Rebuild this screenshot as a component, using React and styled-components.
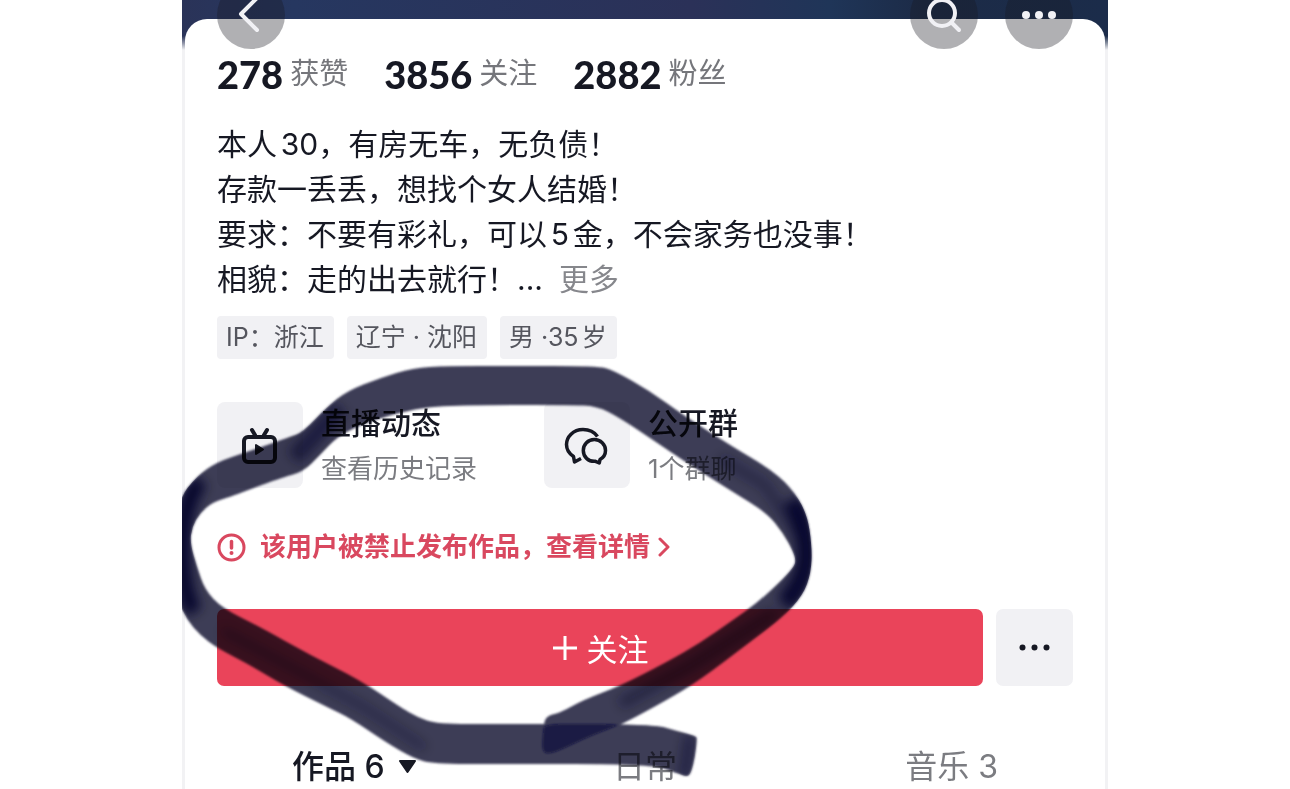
import React from "react";
import styled, { createGlobalStyle } from "styled-components";

const GlobalStyle = createGlobalStyle`
  *, *::before, *::after { box-sizing: border-box; }
  body {
    margin: 0;
    background: #fff;
    color: #161823;
    font-family: Inter, "Noto Sans CJK SC", sans-serif;
    text-autospace: normal;
  }
  button { font: inherit; color: inherit; border: 0; padding: 0; cursor: pointer; }
  a { color: inherit; text-decoration: none; }
  p, h2, ul { margin: 0; padding: 0; }
`;

const Phone = styled.main`
  position: relative;
  display: flex;
  flex-direction: column;
  max-width: 926px;
  min-height: 100vh;
  margin: 0 auto;
  padding: 19px 3px 0;
  overflow: hidden;
  background:
    linear-gradient(to bottom, transparent 36px, #f2f2f4 50px),
    linear-gradient(to right, #2a3358 0, #263760 12%, #2b3158 55%, #1f3558 70%, #1c2b47 80%, #1b2c4a 100%);
`;

const TopBar = styled.nav`
  position: absolute;
  z-index: 1;
  top: -19px;
  left: 35px;
  right: 35px;
  display: flex;
  gap: 27px;
`;

const RoundButton = styled.button`
  width: 68px;
  height: 68px;
  border-radius: 50%;
  background: rgba(22, 22, 32, 0.34);
  margin-right: ${(p) => (p.$push ? "auto" : "0")};
  svg { display: block; }
`;

const Panel = styled.section`
  flex: 1;
  border-radius: 22px 22px 0 0;
  padding-top: 31px;
  background: #fff;
`;

const Content = styled.div`
  padding: 0 32px;
`;

const Stats = styled.ul`
  display: flex;
  gap: 36px;
  list-style: none;
`;

const Stat = styled.li`
  display: flex;
  align-items: center;
  gap: 7px;
  font-size: 29px;
  line-height: 48px;
  color: #75767b;
  strong {
    font-family: Lato, sans-serif;
    font-size: 38px;
    font-weight: 900;
    color: #161823;
  }
`;

const Bio = styled.div`
  margin-top: 24px;
  font-size: 30px;
  line-height: 45px;
`;

const LastLine = styled.div`
  display: flex;
  gap: 16px;
`;

const More = styled.a`
  color: #86878c;
`;

const Tags = styled.ul`
  display: flex;
  gap: 13px;
  margin-top: 14px;
  list-style: none;
`;

const Tag = styled.li`
  padding: 0 10px 0 9px;
  border-radius: 4px;
  background: #f1f1f4;
  color: #55565e;
  font-size: 25px;
  line-height: 43px;
`;

const Cards = styled.div`
  display: flex;
  gap: 67px;
  margin-top: 43px;
`;

const Card = styled.a`
  display: flex;
  gap: 18px;
`;

const CardIcon = styled.span`
  width: 86px;
  height: 86px;
  border-radius: 8px;
  background: #f1f1f4;
  svg { display: block; }
`;

const CardTitle = styled.h2`
  font-size: 30px;
  line-height: 43px;
  font-weight: 500;
`;

const CardNote = styled.p`
  margin-top: 5px;
  font-size: 26px;
  line-height: 38px;
  color: #7b7c81;
  text-autospace: no-autospace;
`;

const Notice = styled.a`
  display: flex;
  align-items: center;
  margin-top: 41px;
  color: #d9485f;
  font-size: 26px;
  line-height: 36px;
  font-weight: 700;
  span { margin-left: 14px; margin-right: 7px; }
`;

const Actions = styled.div`
  display: flex;
  gap: 13px;
  margin-top: 44px;
`;

const FollowButton = styled.button`
  display: flex;
  flex: 1;
  align-items: center;
  justify-content: center;
  gap: 9px;
  height: 77px;
  border-radius: 7px;
  background: #ea445a;
  color: #fff;
  font-size: 31px;
`;

const MoreButton = styled.button`
  width: 77px;
  height: 77px;
  border-radius: 7px;
  background: #f1f1f4;
  svg { display: block; }
`;

const Tabs = styled.nav`
  display: grid;
  grid-template-columns: repeat(3, 1fr);
  margin-top: 59px;
`;

const Tab = styled.button`
  display: flex;
  align-items: center;
  justify-content: center;
  background: none;
  font-size: 32px;
  line-height: 44px;
  font-weight: ${(p) => (p.$active ? 500 : 400)};
  color: ${(p) => (p.$active ? "#161823" : "#7b7c81")};
  svg { margin-left: 13px; margin-right: -32px; }
`;

const Ink = styled.svg`
  position: absolute;
  z-index: 2;
  top: 0;
  left: 0;
  width: 926px;
  height: 789px;
  pointer-events: none;
  mix-blend-mode: multiply;
`;

const OUTLINE = [
  [545, 716], [560, 713], [583, 700], [620, 686], [667, 662], [700, 643], [733, 620], [757, 603],
  [780, 582], [793, 568], [796, 561], [793, 551], [783, 533], [767, 513], [733, 492], [687, 463],
  [650, 438], [620, 418], [597, 406], [570, 405], [500, 405], [433, 406], [397, 413], [360, 425],
  [337, 437], [320, 455], [303, 472], [280, 478], [230, 497], [213, 502], [200, 513], [192, 527],
  [190, 543], [197, 567], [205, 590], [222, 608], [260, 627], [310, 655], [360, 680], [400, 707],
  [417, 717], [437, 724], [500, 724], [653, 724], [677, 731], [696, 736], [697, 739], [695, 757],
  [691, 773], [687, 777], [677, 773], [650, 764], [500, 764], [433, 764], [413, 758], [387, 743],
  [350, 718], [327, 707], [283, 685], [250, 665], [217, 648], [200, 635], [187, 620], [178, 600],
  [176, 550], [178, 500], [197, 476], [217, 462], [247, 452], [290, 437], [303, 432], [327, 407],
  [347, 391], [380, 378], [413, 368], [447, 366], [510, 366], [597, 366], [613, 370], [650, 391],
  [683, 415], [733, 447], [767, 467], [790, 486], [807, 513], [812, 547], [811, 573], [803, 595],
  [783, 617], [750, 642], [700, 680], [667, 700], [617, 727], [590, 736], [567, 747], [550, 754],
  [542, 752], [543, 733],
];

const OVERLAP = [
  [544, 724], [580, 724], [620, 724], [614, 727], [590, 736], [567, 747], [550, 754], [542, 752], [543, 733],
];

// Closed curve that rounds every corner through the midpoints of its edges.
function smooth(points) {
  const mid = (a, b) => `${(a[0] + b[0]) / 2} ${(a[1] + b[1]) / 2}`;
  const last = points[points.length - 1];
  return (
    `M${mid(last, points[0])}` +
    points.map((p, i) => `Q${p[0]} ${p[1]} ${mid(p, points[(i + 1) % points.length])}`).join("") +
    "Z"
  );
}

function Scribble() {
  const outline = smooth(OUTLINE);
  return (
    <Ink viewBox="182 0 926 789" aria-hidden="true">
      <defs>
        <filter id="edge" x="-5%" y="-5%" width="110%" height="110%">
          <feGaussianBlur stdDeviation="1" />
        </filter>
        <filter id="streak" filterUnits="userSpaceOnUse" x="150" y="340" width="700" height="460">
          <feGaussianBlur stdDeviation="6" />
        </filter>
        <clipPath id="band">
          <path d={outline} />
        </clipPath>
      </defs>
      <path d={outline} fill="#3d3c57" filter="url(#edge)" />
      <path d={smooth(OVERLAP)} fill="#0b0b3c" fillOpacity="0.75" filter="url(#edge)" />
      <g clipPath="url(#band)">
        <g fill="none" stroke="#03032a" filter="url(#streak)">
          <path d="M200 480Q182 505 182 548T194 612" strokeWidth="17" strokeOpacity="0.9" />
          <path d="M792 500Q808 530 806 562Q802 586 784 604" strokeWidth="19" strokeOpacity="0.9" />
          <path d="M720 458L765 485L798 535" strokeWidth="10" strokeOpacity="0.35" />
          <path d="M776 612L690 666L620 704" strokeWidth="12" strokeOpacity="0.4" />
          <path d="M294 458Q320 430 340 408" strokeWidth="18" strokeOpacity="0.55" />
          <path d="M222 630L300 672L365 708L425 748" strokeWidth="8" strokeOpacity="0.35" />
          <path d="M690 735L684 778" strokeWidth="10" strokeOpacity="0.5" />
        </g>
      </g>
    </Ink>
  );
}

const BackIcon = () => (
  <svg width="68" height="68" fill="none" stroke="#f1f1f5" strokeWidth="4" strokeLinecap="round" strokeLinejoin="round">
    <path d="M40 17L24 33L40 49" />
  </svg>
);

const SearchIcon = () => (
  <svg width="68" height="68" fill="none" stroke="#f1f1f5" strokeWidth="4" strokeLinecap="round">
    <circle cx="32" cy="32" r="13" />
    <path d="M42 42L49 49" />
  </svg>
);

const DotsIcon = ({ size, r, step, color }) => (
  <svg width={size} height={size} fill={color}>
    {[-step, 0, step].map((dx) => (
      <circle key={dx} cx={size / 2 + dx} cy={size / 2} r={r} />
    ))}
  </svg>
);

const LiveIcon = () => (
  <svg width="86" height="86" fill="none" stroke="#161823" strokeWidth="4" strokeLinecap="round" strokeLinejoin="round">
    <rect x="27" y="35" width="31" height="25" rx="4" />
    <path d="M35 28L38 33M50 28L47 33" />
    <path d="M39 43V52L46 47.500Z" fill="#161823" strokeWidth="2" />
  </svg>
);

const ChatIcon = () => (
  <svg width="86" height="86" fill="none" stroke="#161823" strokeWidth="3.500" strokeLinejoin="round">
    <path d="M53.500 34.500C50 29.500 45 27.500 39 27.500C29 27.500 22.500 35 22.500 42.500C22.500 47.500 25 51.500 29.500 54.500L30.500 60L37 56.500" />
    <path d="M50.300 37.500C56.500 37.500 61.500 42.300 61.500 48.500C61.500 52.500 59.500 55.500 56 57.500L55.300 61L51.500 59.300C44.500 60 39.300 55 39.300 48.500C39.300 42.300 44 37.500 50.300 37.500Z" />
  </svg>
);

const WarningIcon = () => (
  <svg width="29" height="29" fill="none" stroke="currentColor" strokeWidth="3" strokeLinecap="round">
    <circle cx="14.500" cy="14.500" r="12.500" />
    <path d="M14.500 8.500V15" strokeWidth="3.500" />
    <circle cx="14.500" cy="20" r="2" fill="currentColor" stroke="none" />
  </svg>
);

const ChevronIcon = () => (
  <svg width="16" height="20" fill="none" stroke="currentColor" strokeWidth="3" strokeLinecap="round" strokeLinejoin="round">
    <path d="M3 2L11 10L3 18" />
  </svg>
);

const PlusIcon = () => (
  <svg width="26" height="26" fill="none" stroke="#fff" strokeWidth="3">
    <path d="M13 1V25M1 13H25" />
  </svg>
);

const CaretIcon = () => (
  <svg width="19" height="16" fill="currentColor" stroke="currentColor" strokeWidth="2" strokeLinejoin="round">
    <path d="M2 2H17L9.500 13Z" />
  </svg>
);

const STATS = [
  ["278", "获赞"],
  ["3856", "关注"],
  ["2882", "粉丝"],
];

const BIO = ["本人30，有房无车，无负债！", "存款一丢丢，想找个女人结婚！", "要求：不要有彩礼，可以5金，不会家务也没事！"];

const TAGS = ["IP：浙江", "辽宁 · 沈阳", "男 ·35岁"];

const CARDS = [
  { icon: <LiveIcon />, title: "直播动态", note: "查看历史记录" },
  { icon: <ChatIcon />, title: "公开群", note: "1个群聊" },
];

export default function App() {
  return (
    <>
      <GlobalStyle />
      <Phone>
        <TopBar>
          <RoundButton $push aria-label="返回"><BackIcon /></RoundButton>
          <RoundButton aria-label="搜索"><SearchIcon /></RoundButton>
          <RoundButton aria-label="更多选项">
            <DotsIcon size={68} r={4} step={13} color="#f1f1f5" />
          </RoundButton>
        </TopBar>
        <Panel>
          <Content>
            <Stats>
              {STATS.map(([count, label]) => (
                <Stat key={label}><strong>{count}</strong><span>{label}</span></Stat>
              ))}
            </Stats>
            <Bio>
              {BIO.map((line) => <p key={line}>{line}</p>)}
              <LastLine>
                <p>相貌：走的出去就行！...</p>
                <More href="#more">更多</More>
              </LastLine>
            </Bio>
            <Tags>
              {TAGS.map((tag) => <Tag key={tag}>{tag}</Tag>)}
            </Tags>
            <Cards>
              {CARDS.map((card) => (
                <Card key={card.title} href="#card">
                  <CardIcon>{card.icon}</CardIcon>
                  <div>
                    <CardTitle>{card.title}</CardTitle>
                    <CardNote>{card.note}</CardNote>
                  </div>
                </Card>
              ))}
            </Cards>
            <Notice href="#notice">
              <WarningIcon />
              <span>该用户被禁止发布作品，查看详情</span>
              <ChevronIcon />
            </Notice>
            <Actions>
              <FollowButton><PlusIcon />关注</FollowButton>
              <MoreButton aria-label="更多操作">
                <DotsIcon size={77} r={3} step={12} color="#161823" />
              </MoreButton>
            </Actions>
          </Content>
          <Tabs>
            <Tab $active>作品 6<CaretIcon /></Tab>
            <Tab>日常</Tab>
            <Tab>音乐 3</Tab>
          </Tabs>
        </Panel>
        <Scribble />
      </Phone>
    </>
  );
}
